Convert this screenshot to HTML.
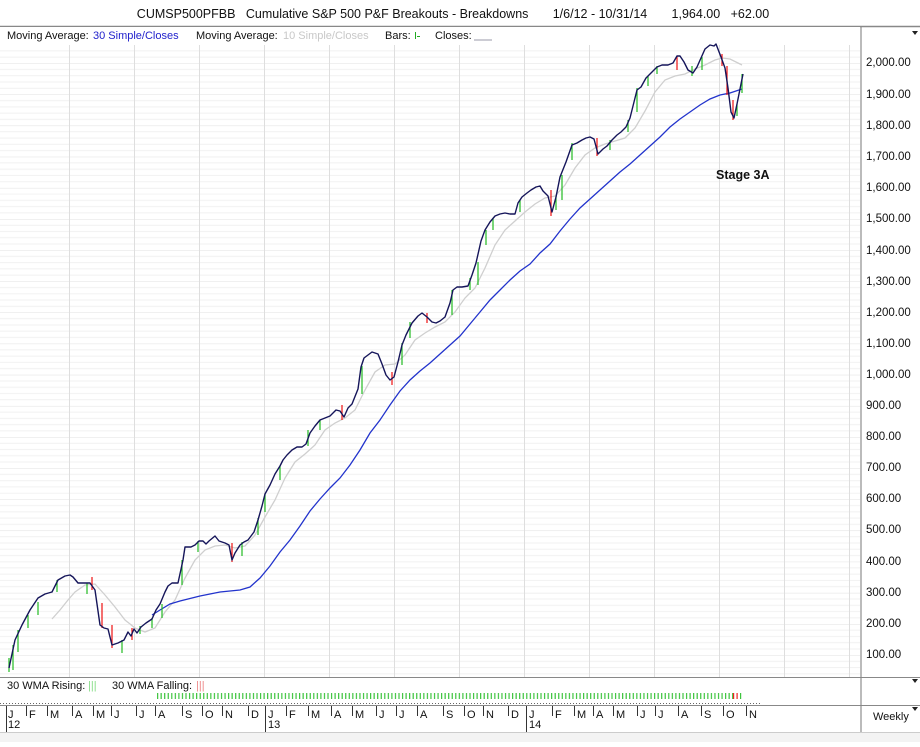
<!DOCTYPE html>
<html><head><meta charset="utf-8"><style>
html,body{margin:0;padding:0;background:#fff;}
body{width:920px;height:742px;overflow:hidden;font-family:"Liberation Sans",sans-serif;position:relative;}
svg text{font-family:"Liberation Sans",sans-serif;}
</style></head><body>
<svg width="920" height="742" viewBox="0 0 920 742" xmlns="http://www.w3.org/2000/svg">
<defs>
<pattern id="hg" x="0" y="0.99" width="860" height="31.15" patternUnits="userSpaceOnUse">
<line x1="0" y1="0" x2="860" y2="0" stroke="#e0e0e0" stroke-width="1"/>
<line x1="0" y1="6.23" x2="860" y2="6.23" stroke="#f1f1f1" stroke-width="1"/>
<line x1="0" y1="12.46" x2="860" y2="12.46" stroke="#f1f1f1" stroke-width="1"/>
<line x1="0" y1="18.69" x2="860" y2="18.69" stroke="#f1f1f1" stroke-width="1"/>
<line x1="0" y1="24.92" x2="860" y2="24.92" stroke="#f1f1f1" stroke-width="1"/>
</pattern>
<pattern id="tk" x="157" y="0" width="3.55" height="10" patternUnits="userSpaceOnUse">
<rect x="0" y="0" width="1.2" height="10" fill="#3ec43e"/>
</pattern>
</defs>
<rect x="0" y="0" width="920" height="742" fill="#fff"/>
<text x="453" y="18" font-size="12.5" text-anchor="middle" fill="#111" xml:space="preserve">CUMSP500PFBB   Cumulative S&amp;P 500 P&amp;F Breakouts - Breakdowns       1/6/12 - 10/31/14       1,964.00   +62.00</text>
<line x1="0" y1="26.5" x2="920" y2="26.5" stroke="#888" stroke-width="1.5"/>
<rect x="0" y="46" width="860" height="630" fill="url(#hg)"/>
<g stroke="#dedede" stroke-width="1">
<line x1="69.5" y1="44" x2="69.5" y2="677"/><line x1="134.5" y1="44" x2="134.5" y2="677"/><line x1="199.5" y1="44" x2="199.5" y2="677"/><line x1="264.5" y1="44" x2="264.5" y2="677"/><line x1="329.5" y1="44" x2="329.5" y2="677"/><line x1="394.5" y1="44" x2="394.5" y2="677"/><line x1="459.5" y1="44" x2="459.5" y2="677"/><line x1="524.5" y1="44" x2="524.5" y2="677"/><line x1="589.5" y1="44" x2="589.5" y2="677"/><line x1="654.5" y1="44" x2="654.5" y2="677"/><line x1="719.5" y1="44" x2="719.5" y2="677"/><line x1="784.5" y1="44" x2="784.5" y2="677"/><line x1="849.5" y1="44" x2="849.5" y2="677"/>
</g>
<rect x="0" y="27" width="860" height="18" fill="#fff"/>
<text x="7" y="39" font-size="11" fill="#111">Moving Average:</text>
<text x="93" y="39" font-size="11" fill="#2222cc">30 Simple/Closes</text>
<text x="196" y="39" font-size="11" fill="#111">Moving Average:</text>
<text x="283" y="39" font-size="11" fill="#c8c8c8">10 Simple/Closes</text>
<text x="385" y="39" font-size="11" fill="#111">Bars:</text>
<rect x="415" y="32" width="1" height="7" fill="#2a2"/><rect x="417" y="36" width="3" height="1" fill="#2a2"/>
<text x="435" y="39" font-size="11" fill="#111">Closes:</text>
<line x1="474" y1="40" x2="492" y2="40" stroke="#99a" stroke-width="1"/>
<line x1="861" y1="27" x2="861" y2="742" stroke="#777" stroke-width="1"/>
<polygon points="912,31 918,31 915,35" fill="#222"/>
<g font-size="11.5" fill="#111">
<text x="866" y="66">2,000.00</text><text x="866" y="98">1,900.00</text><text x="866" y="129">1,800.00</text><text x="866" y="160">1,700.00</text><text x="866" y="191">1,600.00</text><text x="866" y="222">1,500.00</text><text x="866" y="254">1,400.00</text><text x="866" y="285">1,300.00</text><text x="866" y="316">1,200.00</text><text x="866" y="347">1,100.00</text><text x="866" y="378">1,000.00</text><text x="866" y="409">900.00</text><text x="866" y="440">800.00</text><text x="866" y="471">700.00</text><text x="866" y="502">600.00</text><text x="866" y="533">500.00</text><text x="866" y="565">400.00</text><text x="866" y="596">300.00</text><text x="866" y="627">200.00</text><text x="866" y="658">100.00</text>
</g>
<text x="716" y="179" font-size="12.5" font-weight="bold" fill="#111">Stage 3A</text>
<polyline fill="none" stroke="#cfcfcf" stroke-width="1.3" points="52,619 60,610 68,600 75,592 85,585 95,584 105,595 115,607 125,620 135,628 145,632 155,628 165,612 175,600 185,578 195,560 205,550 215,546 225,545 235,548 245,546 255,535 265,517 275,500 285,478 295,462 305,454 315,445 325,430 335,423 345,418 355,410 365,390 375,372 385,365 395,364 405,355 415,340 425,333 435,327 445,322 455,312 465,298 475,288 485,268 495,245 505,230 515,221 525,212 535,204 545,198 555,196 565,185 575,168 585,155 595,148 605,144 615,141 625,138 635,128 645,111 655,92 665,80 675,76 685,74 695,69 705,65 715,60 722,58 730,59 738,63 742,65"/>
<polyline fill="none" stroke="#2233cc" stroke-width="1.3" points="152,615 160,610 170,604 180,601 200,596 220,592 240,590 250,587 260,578 270,566 280,552 290,540 300,526 310,511 320,499 330,488 340,478 350,465 360,450 370,433 380,420 390,405 400,391 410,380 420,371 430,363 440,354 450,345 460,336 470,324 480,312 490,300 500,290 510,280 520,271 530,264 540,253 550,244 560,231 570,219 580,208 590,199 600,190 610,181 620,172 630,164 640,155 650,146 660,137 670,127 680,119 690,112 700,105 710,99 720,95 730,93 742,89"/>
<g stroke="#22bb22" stroke-width="1.2">
<line x1="9" y1="658" x2="9" y2="672"/><line x1="13" y1="645" x2="13" y2="670"/><line x1="18" y1="630" x2="18" y2="652"/><line x1="28" y1="615" x2="28" y2="628"/><line x1="38" y1="602" x2="38" y2="615"/><line x1="57" y1="580" x2="57" y2="592"/><line x1="87" y1="583" x2="87" y2="594"/><line x1="122" y1="640" x2="122" y2="653"/><line x1="140" y1="626" x2="140" y2="634"/><line x1="152" y1="618" x2="152" y2="628"/><line x1="162" y1="604" x2="162" y2="618"/><line x1="182" y1="560" x2="182" y2="585"/><line x1="198" y1="541" x2="198" y2="552"/><line x1="242" y1="542" x2="242" y2="556"/><line x1="258" y1="518" x2="258" y2="535"/><line x1="265" y1="494" x2="265" y2="512"/><line x1="280" y1="466" x2="280" y2="480"/><line x1="308" y1="430" x2="308" y2="446"/><line x1="320" y1="420" x2="320" y2="430"/><line x1="362" y1="366" x2="362" y2="394"/><line x1="402" y1="343" x2="402" y2="365"/><line x1="410" y1="322" x2="410" y2="338"/><line x1="452" y1="290" x2="452" y2="315"/><line x1="470" y1="278" x2="470" y2="290"/><line x1="478" y1="262" x2="478" y2="285"/><line x1="486" y1="230" x2="486" y2="245"/><line x1="493" y1="218" x2="493" y2="230"/><line x1="520" y1="200" x2="520" y2="212"/><line x1="556" y1="196" x2="556" y2="210"/><line x1="562" y1="175" x2="562" y2="200"/><line x1="572" y1="143" x2="572" y2="160"/><line x1="610" y1="140" x2="610" y2="150"/><line x1="628" y1="120" x2="628" y2="132"/><line x1="637" y1="88" x2="637" y2="112"/><line x1="648" y1="76" x2="648" y2="86"/><line x1="657" y1="66" x2="657" y2="74"/><line x1="692" y1="66" x2="692" y2="76"/><line x1="702" y1="57" x2="702" y2="70"/><line x1="737" y1="104" x2="737" y2="116"/><line x1="742" y1="74" x2="742" y2="93"/>
</g>
<g stroke="#ee1111" stroke-width="1.2">
<line x1="92" y1="577" x2="92" y2="590"/><line x1="102" y1="603" x2="102" y2="628"/><line x1="112" y1="625" x2="112" y2="648"/><line x1="132" y1="628" x2="132" y2="640"/><line x1="232" y1="543" x2="232" y2="562"/><line x1="342" y1="405" x2="342" y2="420"/><line x1="392" y1="372" x2="392" y2="385"/><line x1="427" y1="313" x2="427" y2="323"/><line x1="551" y1="190" x2="551" y2="216"/><line x1="597" y1="138" x2="597" y2="156"/><line x1="677" y1="56" x2="677" y2="70"/><line x1="722" y1="54" x2="722" y2="66"/><line x1="727" y1="66" x2="727" y2="95"/><line x1="733" y1="100" x2="733" y2="120"/>
</g>
<polyline fill="none" stroke="#15155a" stroke-width="1.4" stroke-linejoin="round" points="9,668 15,640 22,625 30,610 38,598 45,594 52,592 58,580 65,576 70,575 73,577 78,583 84,583 90,583 95,590 100,625 104,628 108,629 112,645 118,643 124,640 128,632 131,636 134,629 137,633 141,627 146,623 152,619 156,610 160,604 165,592 168,586 172,583 178,583 183,560 185,547 191,547 195,545 199,541 203,541 206,544 209,541 215,536 219,541 225,543 229,545 232,560 235,553 240,545 244,542 248,540 254,532 258,520 262,506 265,494 270,485 275,474 280,466 283,460 287,455 292,450 297,447 302,447 306,444 310,433 315,426 320,420 325,418 330,416 336,410 340,411 344,417 348,408 352,404 358,389 361,367 364,358 368,355 372,352 375,353 378,354 382,364 386,375 390,380 394,377 398,362 402,345 406,335 412,323 418,316 422,313 427,317 432,322 436,323 440,321 445,317 450,303 453,290 457,287 462,287 468,286 472,275 476,263 481,241 485,230 490,222 495,216 500,214 505,213 510,214 515,214 518,203 522,197 527,193 531,190 536,187 540,186 543,191 548,196 552,212 556,197 560,177 566,162 572,145 577,143 582,140 586,138 590,137 594,139 598,154 603,149 607,146 612,140 617,135 621,132 626,127 630,118 634,102 637,90 641,87 646,78 652,72 657,67 662,65 668,65 673,63 677,56 680,56 684,62 688,70 693,73 697,67 701,58 705,49 710,45 714,46 716,44 721,57 725,68 728,88 731,112 734,118 737,104 739,94 743,74"/>
<line x1="0" y1="677.5" x2="920" y2="677.5" stroke="#888" stroke-width="1"/>
<rect x="0" y="678" width="860" height="26" fill="#fff"/>
<text x="7" y="689" font-size="11" fill="#111">30 WMA Rising:</text>
<text x="88" y="689" font-size="11" fill="#8d8">|||</text>
<text x="112" y="689" font-size="11" fill="#111">30 WMA Falling:</text>
<text x="196" y="689" font-size="11" fill="#e88">|||</text>
<polygon points="912,679 918,679 915,683" fill="#222"/>
<rect x="157" y="693" width="576" height="6" fill="url(#tk)"/>
<rect x="733" y="693" width="8" height="6" fill="#fff"/>
<rect x="733" y="693" width="1.2" height="6" fill="#e22"/><rect x="736.5" y="693" width="1.2" height="6" fill="#e22"/><rect x="740" y="693" width="1.2" height="6" fill="#3ec43e"/>
<line x1="0" y1="703.5" x2="762" y2="703.5" stroke="#666" stroke-width="1" stroke-dasharray="1,2"/>
<line x1="0" y1="705.5" x2="920" y2="705.5" stroke="#888" stroke-width="1"/>
<g stroke="#333" stroke-width="1">
<line x1="6.5" y1="706" x2="6.5" y2="732"/><line x1="26.5" y1="706" x2="26.5" y2="716"/><line x1="47.5" y1="706" x2="47.5" y2="716"/><line x1="72.5" y1="706" x2="72.5" y2="716"/><line x1="93.5" y1="706" x2="93.5" y2="716"/><line x1="111.5" y1="706" x2="111.5" y2="716"/><line x1="136.5" y1="706" x2="136.5" y2="716"/><line x1="155.5" y1="706" x2="155.5" y2="716"/><line x1="182.5" y1="706" x2="182.5" y2="716"/><line x1="202.5" y1="706" x2="202.5" y2="716"/><line x1="222.5" y1="706" x2="222.5" y2="716"/><line x1="248.5" y1="706" x2="248.5" y2="716"/><line x1="265.5" y1="706" x2="265.5" y2="732"/><line x1="286.5" y1="706" x2="286.5" y2="716"/><line x1="308.5" y1="706" x2="308.5" y2="716"/><line x1="331.5" y1="706" x2="331.5" y2="716"/><line x1="352.5" y1="706" x2="352.5" y2="716"/><line x1="376.5" y1="706" x2="376.5" y2="716"/><line x1="396.5" y1="706" x2="396.5" y2="716"/><line x1="417.5" y1="706" x2="417.5" y2="716"/><line x1="443.5" y1="706" x2="443.5" y2="716"/><line x1="464.5" y1="706" x2="464.5" y2="716"/><line x1="483.5" y1="706" x2="483.5" y2="716"/><line x1="508.5" y1="706" x2="508.5" y2="716"/><line x1="526.5" y1="706" x2="526.5" y2="732"/><line x1="552.5" y1="706" x2="552.5" y2="716"/><line x1="574.5" y1="706" x2="574.5" y2="716"/><line x1="593.5" y1="706" x2="593.5" y2="716"/><line x1="613.5" y1="706" x2="613.5" y2="716"/><line x1="637.5" y1="706" x2="637.5" y2="716"/><line x1="655.5" y1="706" x2="655.5" y2="716"/><line x1="678.5" y1="706" x2="678.5" y2="716"/><line x1="701.5" y1="706" x2="701.5" y2="716"/><line x1="723.5" y1="706" x2="723.5" y2="716"/><line x1="746.5" y1="706" x2="746.5" y2="716"/>
</g>
<g font-size="11" fill="#111">
<text x="8" y="718">J</text><text x="29" y="718">F</text><text x="50" y="718">M</text><text x="75" y="718">A</text><text x="96" y="718">M</text><text x="114" y="718">J</text><text x="139" y="718">J</text><text x="158" y="718">A</text><text x="185" y="718">S</text><text x="205" y="718">O</text><text x="225" y="718">N</text><text x="251" y="718">D</text><text x="268" y="718">J</text><text x="289" y="718">F</text><text x="311" y="718">M</text><text x="334" y="718">A</text><text x="355" y="718">M</text><text x="379" y="718">J</text><text x="399" y="718">J</text><text x="420" y="718">A</text><text x="446" y="718">S</text><text x="467" y="718">O</text><text x="486" y="718">N</text><text x="511" y="718">D</text><text x="529" y="718">J</text><text x="555" y="718">F</text><text x="577" y="718">M</text><text x="596" y="718">A</text><text x="616" y="718">M</text><text x="640" y="718">J</text><text x="658" y="718">J</text><text x="681" y="718">A</text><text x="704" y="718">S</text><text x="726" y="718">O</text><text x="749" y="718">N</text>
<text x="8" y="728">12</text><text x="268" y="728">13</text><text x="529" y="728">14</text>
<text x="873" y="720" font-size="11">Weekly</text>
</g>
<polygon points="912,707 918,707 915,711" fill="#222"/>
<rect x="0" y="733" width="920" height="9" fill="#f3f3f3"/>
<line x1="0" y1="732.5" x2="920" y2="732.5" stroke="#ccc" stroke-width="1"/>
</svg>
</body></html>
